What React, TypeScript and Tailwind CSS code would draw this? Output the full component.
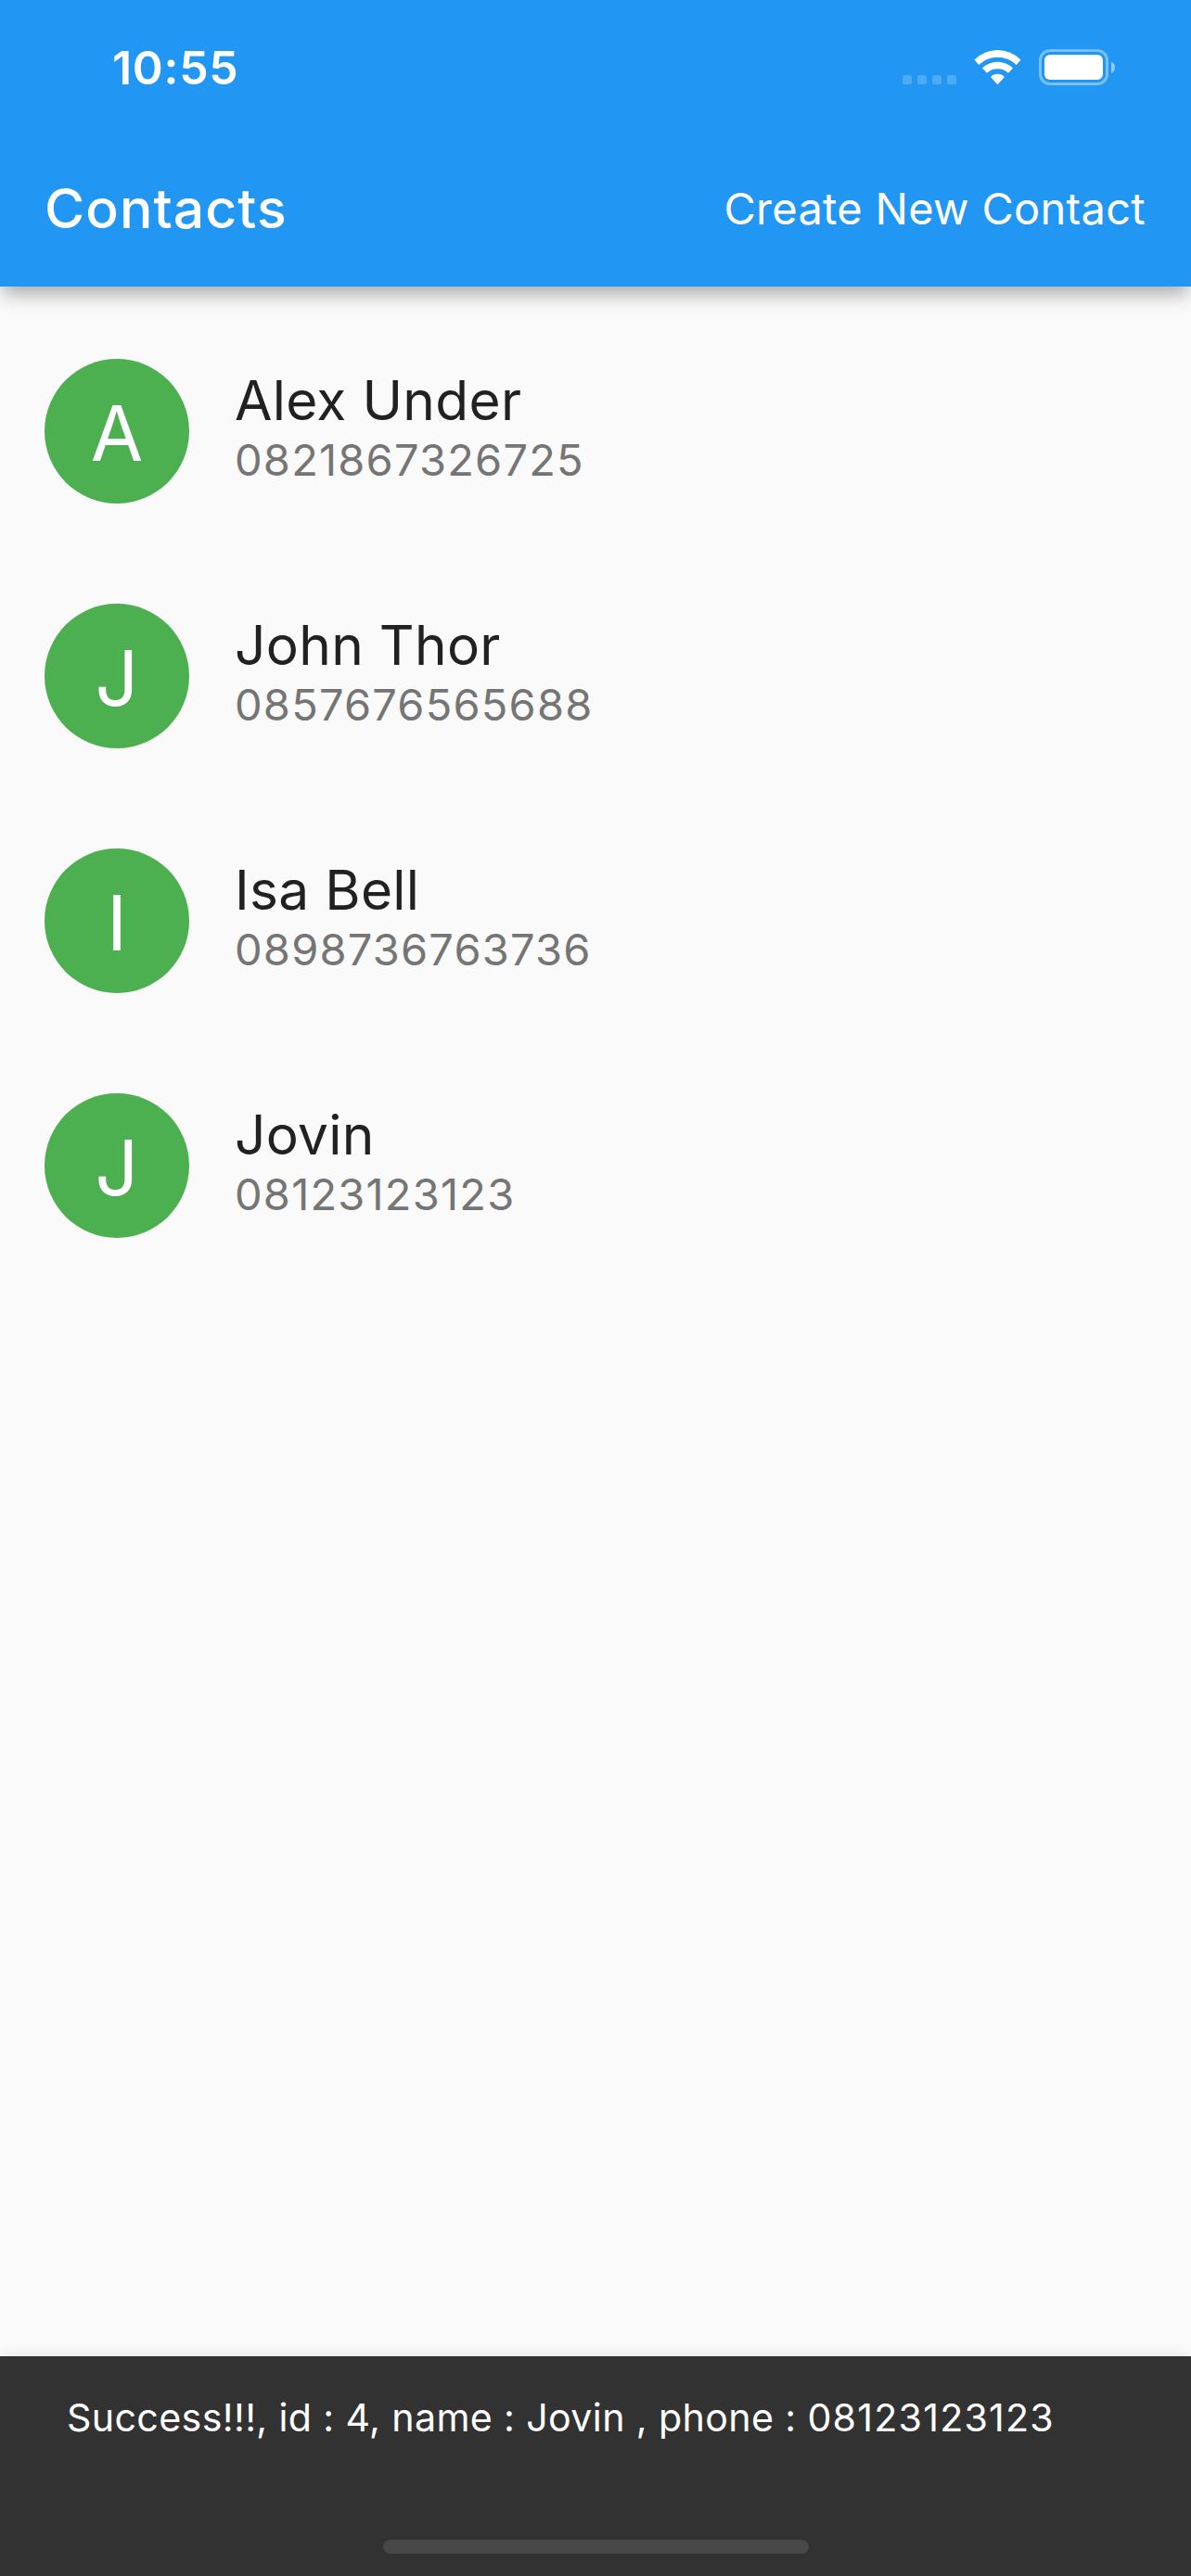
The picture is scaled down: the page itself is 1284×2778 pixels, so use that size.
const contacts = [
  { name: "Alex Under", phone: "0821867326725" },
  { name: "John Thor", phone: "0857676565688" },
  { name: "Isa Bell", phone: "0898736763736" },
  { name: "Jovin", phone: "08123123123" },
];

function StatusIcons() {
  return (
    <svg width="236" height="45" viewBox="0 0 236 45" fill="none">
      <g fill="#fff" fillOpacity="0.2">
        <rect x="3" y="31" width="10" height="10" rx="2.500" />
        <rect x="19" y="31" width="10" height="10" rx="2.500" />
        <rect x="35" y="31" width="10" height="10" rx="2.500" />
        <rect x="51" y="31" width="10" height="10" rx="2.500" />
      </g>
      <g fill="#fff">
        <path d="M80.500 14.500 A35 35 0 0 1 130.500 14.500 L125.700 20 A28.700 28.700 0 0 0 85.300 20 Z" />
        <path d="M89 23.400 A23.900 23.900 0 0 1 122 23.400 L117 28.700 A17.200 17.200 0 0 0 94 28.700 Z" />
        <path d="M98 32.900 A10.500 10.500 0 0 1 113 32.900 L105.500 41.200 Z" />
      </g>
      <rect x="151.500" y="4.500" width="72" height="36" rx="10.500" stroke="#fff" strokeOpacity="0.4" strokeWidth="3" />
      <rect x="156" y="9" width="63" height="27" rx="6" fill="#fff" />
      <path d="M228 16.500 Q232 18.500 232 22.750 Q232 27 228 29 Z" fill="#fff" fillOpacity="0.5" />
    </svg>
  );
}

export default function App() {
  return (
    <div className="flex h-[2778px] w-[1284px] flex-col overflow-hidden bg-[#fafafa] font-['Inter',sans-serif]">
      <header className="z-10 h-[309px] shrink-0 bg-[#2196f3] text-white shadow-[0_12px_18px_-3px_rgba(0,0,0,0.3)]">
        <div className="flex h-[141px] items-center justify-between pt-1 pr-[78px] pl-[121px]">
          <span className="pt-px text-[50px] font-semibold tracking-[0.7px]">10:55</span>
          <StatusIcons />
        </div>
        <div className="flex h-[168px] items-center justify-between pr-[49px] pl-12">
          <h1 className="text-[59px] font-medium tracking-[1px]">Contacts</h1>
          <button className="text-[47px] tracking-[0.3px]">Create New Contact</button>
        </div>
      </header>
      <main className="flex-1 pt-6">
        {contacts.map((c) => (
          <div key={c.name} className="flex h-[264px] items-center gap-[49px] pl-12">
            <div className="flex size-[156px] items-center justify-center rounded-full bg-[#4caf50] pt-1 text-[82px] text-white">
              {c.name[0]}
            </div>
            <div className="flex flex-col pb-[11px]">
              <span className="text-[58.6px] leading-[72px] tracking-[0.3px] text-[#212121]">{c.name}</span>
              <span className="text-[47px] leading-[56px] tracking-[1.2px] text-[#757575]">{c.phone}</span>
            </div>
          </div>
        ))}
      </main>
      <footer className="flex h-[237px] shrink-0 flex-col items-center justify-between bg-[#323232] pt-[40px] pb-[24px] shadow-[0_0_14px_rgba(0,0,0,0.1)]">
        <p className="w-full pl-[72px] text-[41.2px] leading-[52px] tracking-[0.35px] text-white">
          Success!!!, id : 4, name : Jovin , phone : <span className="tracking-[1.2px]">08123123123</span>
        </p>
        <div className="h-[15px] w-[459px] rounded-full bg-[#484848]" />
      </footer>
    </div>
  );
}
